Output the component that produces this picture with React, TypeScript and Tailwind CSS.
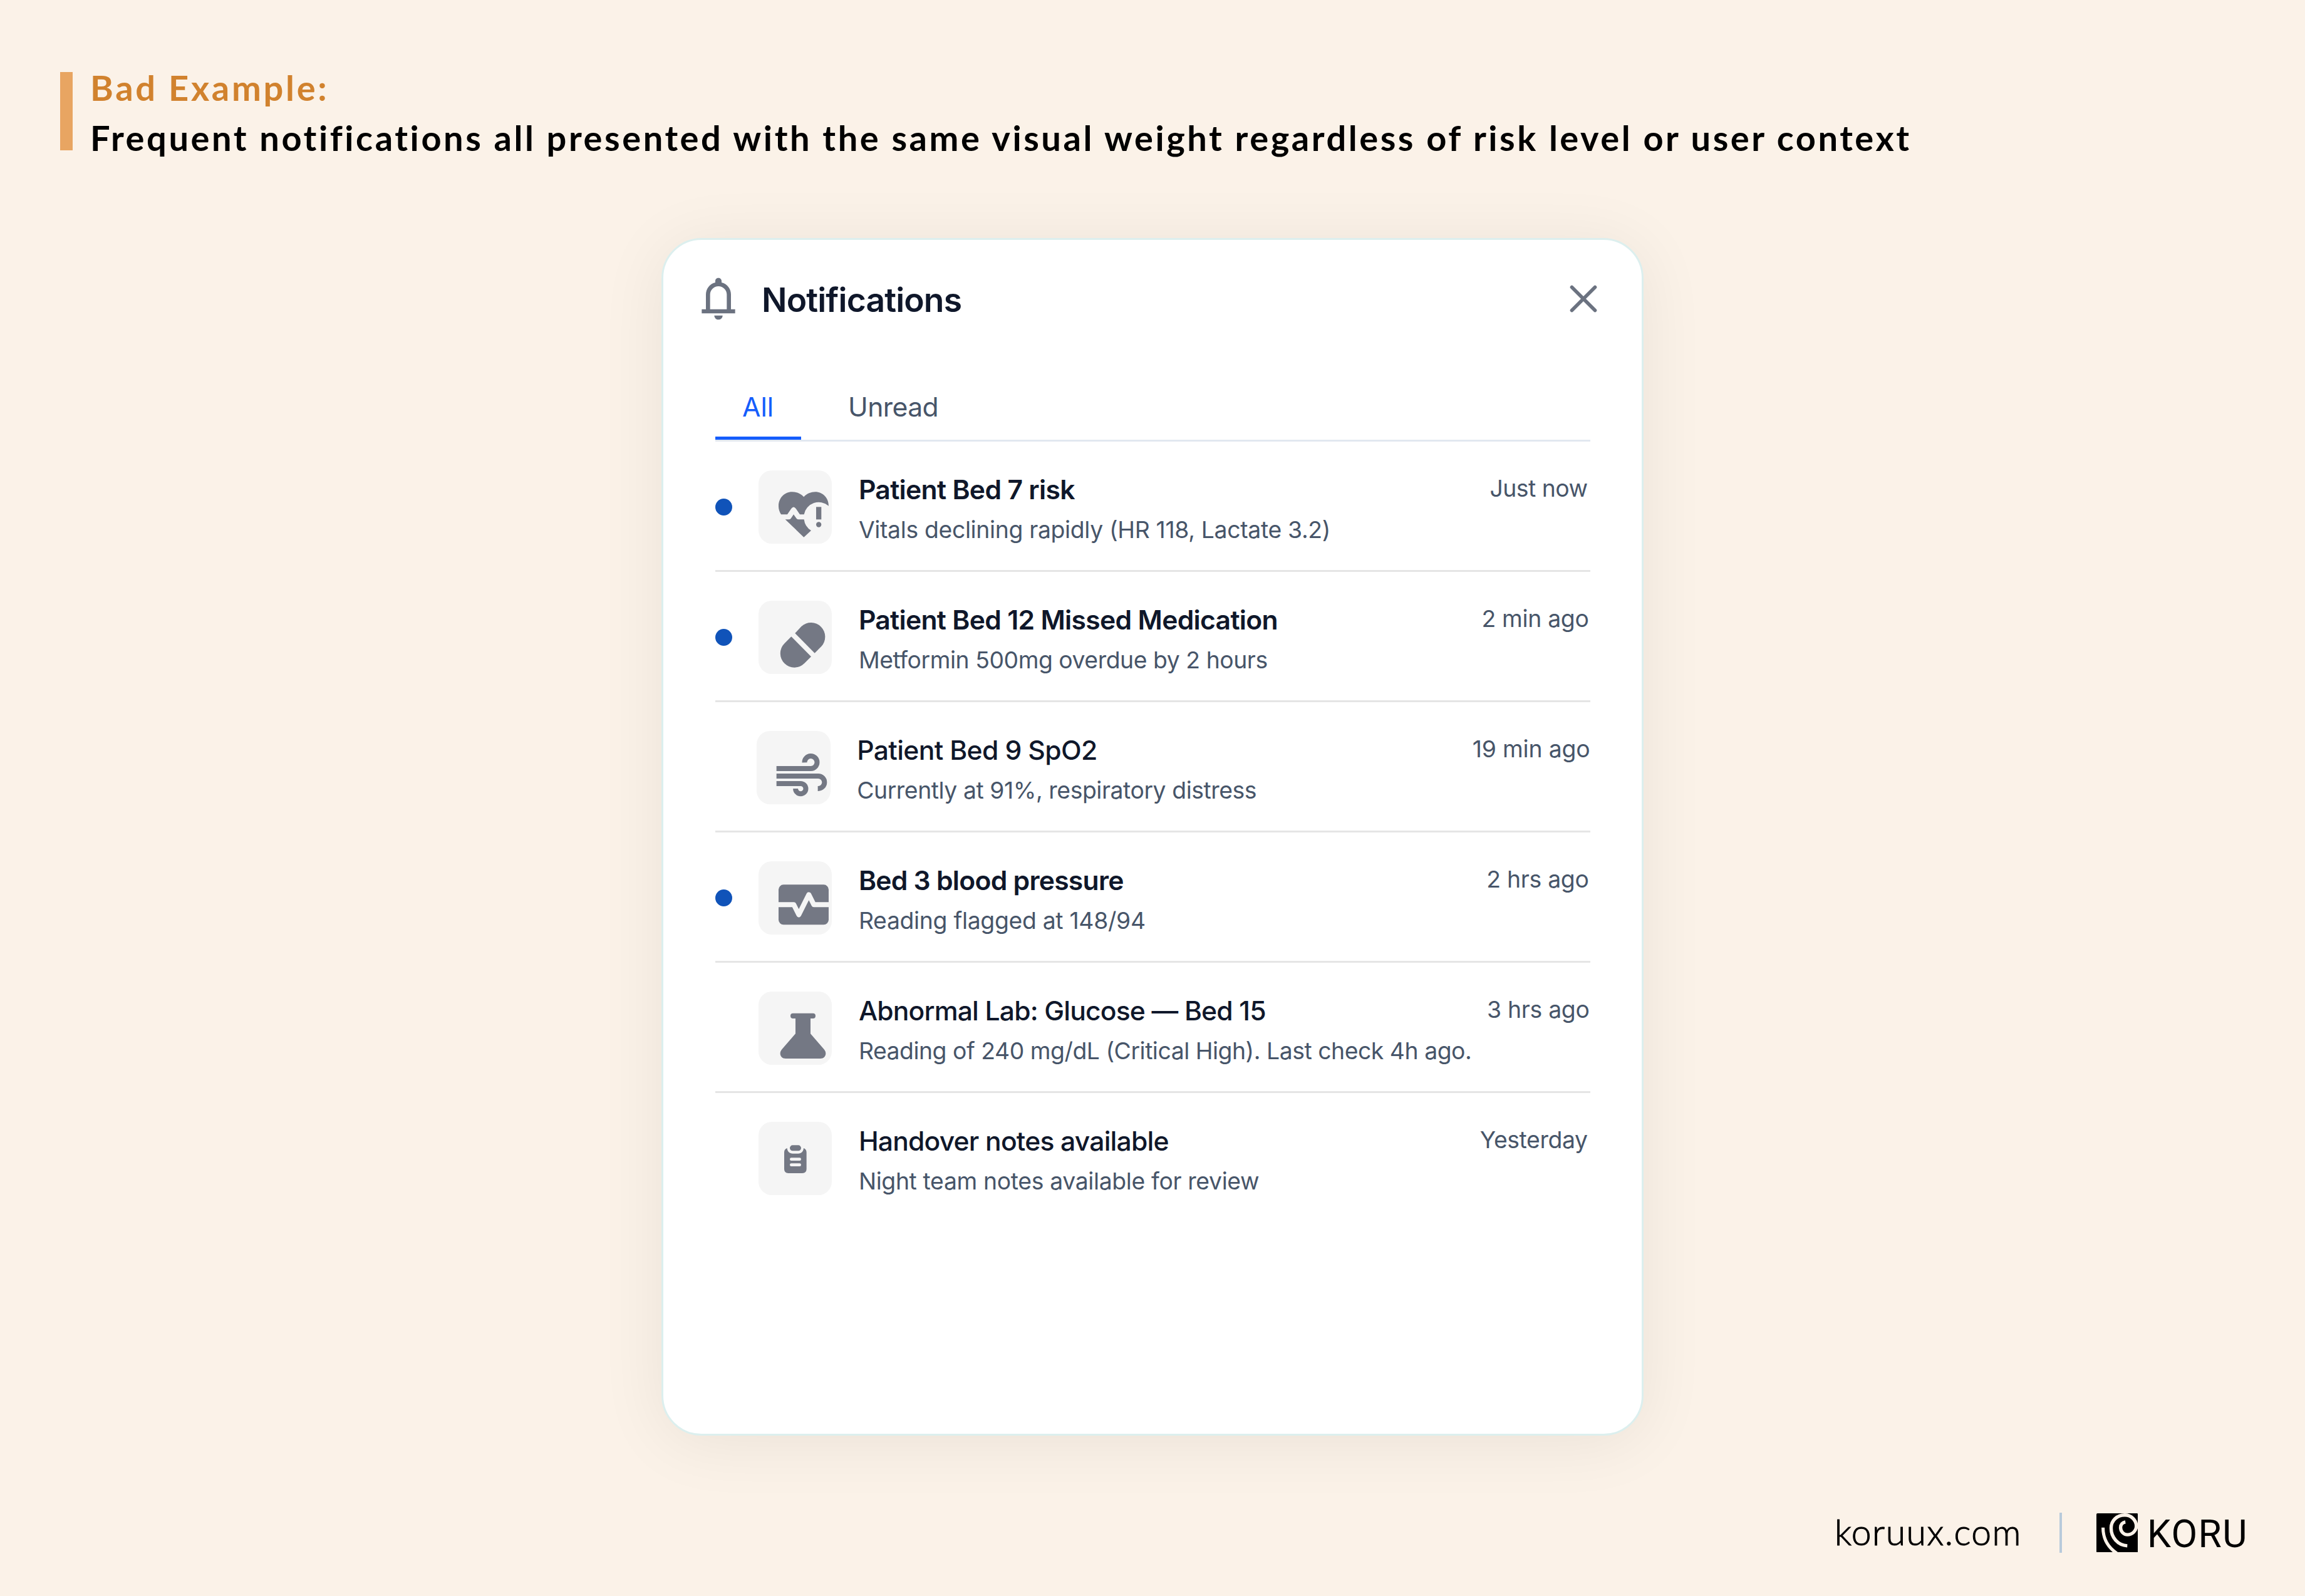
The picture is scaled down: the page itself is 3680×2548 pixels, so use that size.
import type { ReactNode } from "react";

const INK = "#747884";
const TILE = "#f5f5f5";
const PAGE = "#fbf2e8";

type Item = {
  title: string;
  titleClass: string;
  text: string;
  textClass: string;
  time: string;
  timeClass: string;
  unread?: boolean;
  outdented?: boolean;
  icon: ReactNode;
};

function HeartAlertIcon() {
  return (
    <svg viewBox="273 92 352 352" className="size-full" fill={INK}>
      <path d="M381 303C373 290 369 277 369 263C369 224 398 195 433 195C456 195 475 203 490 219C505 203 524 195 545 195C581 195 609 224 609 262A72 72 0 0 0 491 303H471L452 275Q441 260 430 275L411 303Z" />
      <path d="M401 327H418Q424 327 428 322L441 303L455 322Q459 327 465 327H491A72 72 0 0 0 525 380L490 412Z" />
      <rect x="549" y="267" width="25" height="60" />
      <circle cx="561.5" cy="351.5" r="12.5" />
    </svg>
  );
}

function PillIcon() {
  return (
    <svg viewBox="273 716 352 352" className="size-full" fill={INK}>
      <path d="M430 888L525 984L492.7 1016.3A67.5 67.5 0 0 1 397.3 920.7Z" />
      <path d="M448 872L478.6 839.4A67.5 67.5 0 0 1 574 934.8L542 967Z" />
    </svg>
  );
}

function WindIcon() {
  return (
    <svg viewBox="265 110 352 352" className="size-full" fill="none" stroke={INK} strokeWidth="24">
      <path d="M360 290H525A30 30 0 1 0 494.5 261" />
      <path d="M360 326H560A30 30 0 0 1 560 386H558" />
      <path d="M360 362H476A24.5 24.5 0 1 1 451.5 386" />
    </svg>
  );
}

function PulseIcon() {
  return (
    <svg viewBox="273 734 352 352" className="size-full">
      <rect x="369" y="846" width="240" height="192" rx="24" fill={INK} />
      <path
        d="M366 942H442L466 990L514 894L538 942H612"
        fill="none"
        stroke={TILE}
        strokeWidth="24"
        strokeLinejoin="round"
      />
    </svg>
  );
}

function FlaskIcon() {
  return (
    <svg viewBox="273 127 352 352" className="size-full" fill={INK}>
      <rect x="426" y="231" width="120" height="25" rx="12" />
      <path d="M450 250H522V329L587 404C604 424 592 448 569 448H403C380 448 368 424 385 404L450 329Z" />
    </svg>
  );
}

function ClipboardIcon() {
  return (
    <svg viewBox="273 752 352 352" className="size-full">
      <path
        d="M410 878C411 894 421 904 437 904H463C479 904 488 894 489 878C498 881 503 888 503 898V978Q503 998 483 998H416Q396 998 396 978V898C396 888 401 881 410 878Z"
        fill={INK}
      />
      <rect x="423" y="864" width="54" height="27" rx="13.5" fill={INK} />
      <rect x="423" y="924" width="54" height="14" rx="7" fill={TILE} />
      <rect x="423" y="951" width="54" height="14" rx="7" fill={TILE} />
    </svg>
  );
}

function BellIcon() {
  return (
    <svg viewBox="0 0 24 24" className="size-20 shrink-0" fill="#6b7280">
      <path d="M4 19v-2h2v-7c0-1.383.417-2.612 1.25-3.688C8.083 5.237 9.167 4.533 10.5 4.2V3.5c0-.417.146-.77.438-1.063C11.229 2.146 11.583 2 12 2s.77.146 1.063.438c.291.291.437.645.437 1.062v.7c1.333.333 2.417 1.037 3.25 2.113C17.583 7.388 18 8.617 18 10v7h2v2H4Zm8 3c-.55 0-1.02-.196-1.412-.587A1.926 1.926 0 0 1 10 20h4c0 .55-.196 1.02-.588 1.413A1.926 1.926 0 0 1 12 22Zm-4-5h8v-7c0-1.1-.392-2.042-1.175-2.825C14.042 6.392 13.1 6 12 6s-2.042.392-2.825 1.175C8.392 7.958 8 8.9 8 10v7Z" />
    </svg>
  );
}

function CloseIcon() {
  return (
    <svg viewBox="0 0 64 64" className="size-16 shrink-0" fill="none" stroke="#6b7280" strokeWidth="5.6" strokeLinecap="round">
      <path d="M13.5 13.5L50.5 50.5M50.5 13.5L13.5 50.5" />
    </svg>
  );
}

function KoruMark() {
  return (
    <svg viewBox="33 30 198 186" className="h-[62.5px] w-[66.4px] shrink-0">
      <rect x="33" y="30" width="198" height="186" rx="5" fill="#000" />
      <g fill="none" stroke={PAGE}>
        <path
          strokeWidth="16"
          d="M180 184.5C135 182 103 145 103 100C103 65 130 38 168 38C198 38 223 62 223 91C223 113 203 131.5 181 131.5C162 131.5 148 116 148 98C148 84 157 73 171 71"
        />
        <path strokeWidth="15" d="M64.5 98C64.5 150 88 192 130 220" />
      </g>
    </svg>
  );
}

const items: Item[] = [
  {
    title: "Patient Bed 7 risk",
    titleClass: "font-semibold tracking-[-0.68px]",
    text: "Vitals declining rapidly (HR 118, Lactate 3.2)",
    textClass: "tracking-[-0.33px]",
    time: "Just now",
    timeClass: "mr-[4px] tracking-[-0.5px]",
    unread: true,
    icon: <HeartAlertIcon />,
  },
  {
    title: "Patient Bed 12 Missed Medication",
    titleClass: "font-semibold tracking-[-0.7px]",
    text: "Metformin 500mg overdue by 2 hours",
    textClass: "tracking-[-0.45px]",
    time: "2 min ago",
    timeClass: "mr-[2px] tracking-[-0.3px]",
    unread: true,
    icon: <PillIcon />,
  },
  {
    title: "Patient Bed 9 SpO2",
    titleClass: "font-medium tracking-[-0.66px]",
    text: "Currently at 91%, respiratory distress",
    textClass: "tracking-[-0.44px]",
    time: "19 min ago",
    timeClass: "tracking-[-0.15px]",
    outdented: true,
    icon: <WindIcon />,
  },
  {
    title: "Bed 3 blood pressure",
    titleClass: "font-semibold tracking-[-0.75px]",
    text: "Reading flagged at 148/94",
    textClass: "tracking-[-0.3px]",
    time: "2 hrs ago",
    timeClass: "mr-[2px] tracking-[-0.3px]",
    unread: true,
    icon: <PulseIcon />,
  },
  {
    title: "Abnormal Lab: Glucose — Bed 15",
    titleClass: "font-medium tracking-[-0.85px]",
    text: "Reading of 240 mg/dL (Critical High). Last check 4h ago.",
    textClass: "tracking-[-0.47px]",
    time: "3 hrs ago",
    timeClass: "mr-[1px] tracking-[-0.3px]",
    icon: <FlaskIcon />,
  },
  {
    title: "Handover notes available",
    titleClass: "font-medium tracking-[-0.82px]",
    text: "Night team notes available for review",
    textClass: "tracking-[-0.35px]",
    time: "Yesterday",
    timeClass: "mr-[4px] tracking-[-0.4px]",
    icon: <ClipboardIcon />,
  },
];

function NotificationRow({ item, last }: { item: Item; last: boolean }) {
  return (
    <li className={last ? "h-[208px]" : "h-[208px] border-b-[3px] border-[#e5e5e5]"}>
      <div className="flex items-start whitespace-nowrap">
        <div className={item.outdented ? "-ml-[2.67px] flex items-start" : "flex items-start"}>
          <div className="mt-[91px] size-[27px] shrink-0">
            {item.unread && <div className="size-full rounded-full bg-[#1053b9]" />}
          </div>
          <div className="mt-[45.4px] ml-[42.4px] size-[117.3px] shrink-0 overflow-hidden rounded-[21.3px] bg-[#f5f5f5]">
            {item.icon}
          </div>
          <div className="mt-[44.5px] ml-[42.7px]">
            <h2 className={`text-[42.67px] leading-[64px] text-[#0f172a] ${item.titleClass}`}>{item.title}</h2>
            <p className={`mt-1 text-[37.33px] leading-[56px] text-[#475569] ${item.textClass}`}>{item.text}</p>
          </div>
        </div>
        <time className={`mt-[46.5px] ml-auto text-[37.33px] leading-[56px] text-[#475569] ${item.timeClass}`}>
          {item.time}
        </time>
      </div>
    </li>
  );
}

export default function App() {
  return (
    <div className="flex h-[2548px] w-[3680px] flex-col overflow-hidden bg-[#fbf2e8]">
      <header className="flex h-[259px] items-start pt-[99px] pl-24 font-['Lato',sans-serif] text-[56px] leading-[80px] font-bold whitespace-nowrap">
        <div className="mt-4 h-[125px] w-5 bg-[#e8a562]" />
        <div className="mt-px ml-[28px]">
          <p className="tracking-[3.7px] text-[#d1822e]">Bad Example:</p>
          <h1 className="tracking-[3.55px] text-black">
            Frequent notifications all presented with the same visual weight regardless of risk level or user context
          </h1>
        </div>
      </header>

      <main className="mt-[121px] ml-[1056px] flex h-[1912px] w-[1568px] flex-col rounded-[64px] border-[3px] border-[#dcefee] bg-white font-['Inter',sans-serif] shadow-[0_10px_106px_rgba(0,0,0,0.07)]">
        <div className="flex items-center pt-[54.3px] pr-[61px] pl-12">
          <BellIcon />
          <h1 className="mt-[2px] -mb-[2px] ml-[29px] text-[53.33px] leading-[80px] font-semibold tracking-[-0.85px] text-[#0f172a]">
            Notifications
          </h1>
          <div className="ml-auto">
            <CloseIcon />
          </div>
        </div>

        <div className="mx-[82.5px] mt-[100.7px]">
          <nav className="flex gap-8 border-b-[3px] border-[#e2e8f0] text-[42.67px] leading-[64px]">
            <button className="w-[137px] border-b-[5px] border-[#155dfc] pb-[15.5px] text-center text-[#155dfc]">All</button>
            <button className="border-b-[5px] border-transparent px-[43.5px] pb-[15.5px] tracking-[-0.6px] text-[#475569]">
              Unread
            </button>
          </nav>
          <ul>
            {items.map((item, i) => (
              <NotificationRow key={item.title} item={item} last={i === items.length - 1} />
            ))}
          </ul>
        </div>
      </main>

      <footer className="mt-[123px] ml-[2929px] flex h-16 items-center whitespace-nowrap text-black">
        <span className="mb-[5px] w-[358.5px] font-['Lato',sans-serif] text-[57px] leading-[64px] font-light tracking-[1.5px] [-webkit-text-stroke:1px_black]">
          koruux.com
        </span>
        <div className="h-16 w-[4.5px] bg-[#b8cadb]" />
        <div className="ml-[54.5px] flex items-center">
          <KoruMark />
          <span className="mt-[5px] ml-[15px] font-['Roboto',sans-serif] text-[60.5px] leading-[64px] font-normal tracking-[1.5px]">
            KORU
          </span>
        </div>
      </footer>
    </div>
  );
}
